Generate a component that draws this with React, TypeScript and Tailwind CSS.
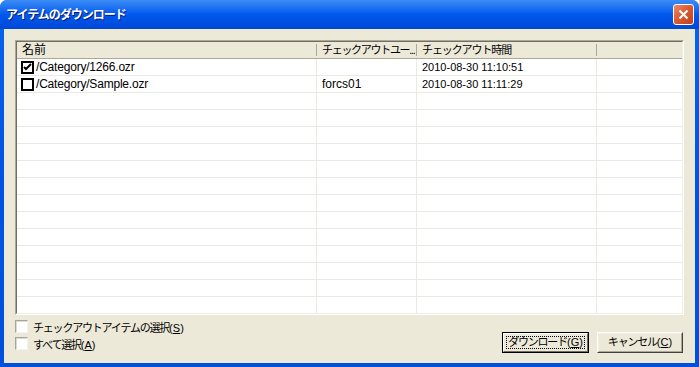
import React from 'react';

interface Item {
  name: string;
  user: string;
  time: string;
  checked: boolean;
}

const items: Item[] = [
  { name: '/Category/1266.ozr', user: '', time: '2010-08-30 11:10:51', checked: true },
  { name: '/Category/Sample.ozr', user: 'forcs01', time: '2010-08-30 11:11:29', checked: false },
];

const font = { fontFamily: '"Liberation Sans", "Noto Sans CJK JP", sans-serif' };

// listview checkbox (flat black box)
const RowCheck = ({ checked }: { checked: boolean }) => (
  <span className="w-[13px] h-[13px] border-2 border-black bg-white flex items-center justify-center shrink-0">
    {checked && (
      <svg width="9" height="9" viewBox="0 0 9 9">
        <path d="M1 4 L3 6 L8 1" stroke="#000" strokeWidth="2" fill="none" />
      </svg>
    )}
  </span>
);

// "ラベル(X)" with underlined accelerator; kana squeezed, parens normal
const Accel = ({ label, accel }: { label: string; accel: string }) => (
  <span className="text-[11px] text-black whitespace-nowrap">
    <span className="tracking-[-1.2px]">{label}</span>(<span className="underline">{accel}</span>)
  </span>
);

const DialogCheck = ({ label, accel }: { label: string; accel: string }) => (
  <label className="flex items-center h-[17px]">
    <span className="w-[13px] h-[13px] border border-t-[#a7a597] border-l-[#a7a597] border-b-[#f4f3ee] border-r-[#f4f3ee] bg-white shadow-[inset_1px_1px_0_#dcdad0]" />
    <span className="ml-[5px]">
      <Accel label={label} accel={accel} />
    </span>
  </label>
);

const App = () => {
  const emptyRows = Array.from({ length: 14 });

  return (
    <div className="w-[699px] h-[367px] overflow-hidden bg-white" style={font}>
      <div className="w-full h-full flex flex-col rounded-t-[7px] bg-gradient-to-b from-[#0a63ec] via-[#0054e3] to-[#0050dc]">
        {/* title bar */}
        <div className="h-[29px] flex items-center justify-between pl-[6px] pr-[5px] bg-gradient-to-b from-[#3b8cf5] via-[#0058ee] to-[#0048d6] rounded-t-[7px]">
          <span className="text-white font-bold text-[12px] tracking-[-1px] [text-shadow:1px_1px_0_#0a1a6c]">
            アイテムのダウンロード
          </span>
          <button className="w-[21px] h-[21px] rounded-[3px] border border-white bg-gradient-to-br from-[#e9896a] via-[#d8582f] to-[#c2401c] flex items-center justify-center">
            <svg width="11" height="11" viewBox="0 0 11 11">
              <path d="M1.5 1.5 L9.5 9.5 M9.5 1.5 L1.5 9.5" stroke="#fff" strokeWidth="2" />
            </svg>
          </button>
        </div>

        {/* client */}
        <div className="flex-1 mx-[4px] mb-[4px] bg-[#ece9d8] flex flex-col px-[11px] pt-[11px]">
          {/* list view */}
          <div className="h-[275px] border border-t-[#aca899] border-l-[#aca899] border-b-white border-r-white">
            <div className="h-full border border-t-[#716f64] border-l-[#716f64] border-b-[#f1efe2] border-r-[#f1efe2] bg-white flex flex-col overflow-hidden text-[11px] text-black">
              {/* header */}
              <div className="h-[17px] shrink-0 flex bg-[#ece9d8] border-b border-[#aca899]">
                <div className="w-[300px] flex items-center pl-[5px] border-r border-[#aca899] my-[2px] text-[12px]">名前</div>
                <div className="w-[100px] flex items-center pl-[5px] border-r border-[#aca899] my-[2px] tracking-[-1.3px] whitespace-nowrap overflow-hidden">
                  チェックアウトユー...
                </div>
                <div className="w-[180px] flex items-center pl-[5px] border-r border-[#aca899] my-[2px] tracking-[-1.1px]">
                  チェックアウト時間
                </div>
                <div className="flex-1" />
              </div>

              {items.map((it) => (
                <div key={it.name} className="h-[17px] shrink-0 flex border-b border-[#ebeae2]">
                  <div className="w-[300px] flex items-center pl-[4px] gap-[2px] border-r border-[#ebeae2]">
                    <RowCheck checked={it.checked} />
                    <span className="text-[12px] tracking-[-0.2px]">{it.name}</span>
                  </div>
                  <div className="w-[100px] flex items-center pl-[5px] border-r border-[#ebeae2] text-[12px]">{it.user}</div>
                  <div className="w-[180px] flex items-center pl-[5px] border-r border-[#ebeae2]">{it.time}</div>
                  <div className="flex-1" />
                </div>
              ))}

              {emptyRows.map((_, i) => (
                <div key={i} className="h-[17px] shrink-0 flex border-b border-[#ebeae2]">
                  <div className="w-[300px] border-r border-[#ebeae2]" />
                  <div className="w-[100px] border-r border-[#ebeae2]" />
                  <div className="w-[180px] border-r border-[#ebeae2]" />
                  <div className="flex-1" />
                </div>
              ))}
            </div>
          </div>

          {/* bottom options + buttons */}
          <div className="flex justify-between mt-[3px]">
            <div className="flex flex-col">
              <DialogCheck label="チェックアウトアイテムの選択" accel="S" />
              <DialogCheck label="すべて選択" accel="A" />
            </div>
            <div className="flex gap-[8px] mt-[14px] pr-[1px]">
              <button className="w-[87px] h-[21px] border border-black bg-[#ece9d8]">
                <div className="h-full border border-t-white border-l-white border-b-[#716f64] border-r-[#716f64] p-[2px]">
                  <div className="h-full border border-dotted border-black flex items-center justify-center">
                    <Accel label="ダウンロード" accel="G" />
                  </div>
                </div>
              </button>
              <button className="w-[86px] h-[21px] border border-t-white border-l-white border-b-[#404040] border-r-[#404040] bg-[#ece9d8]">
                <div className="h-full border border-t-[#f1efe2] border-l-[#f1efe2] border-b-[#aca899] border-r-[#aca899] flex items-center justify-center">
                  <Accel label="キャンセル" accel="C" />
                </div>
              </button>
            </div>
          </div>
        </div>
      </div>
    </div>
  );
};

export default App;
